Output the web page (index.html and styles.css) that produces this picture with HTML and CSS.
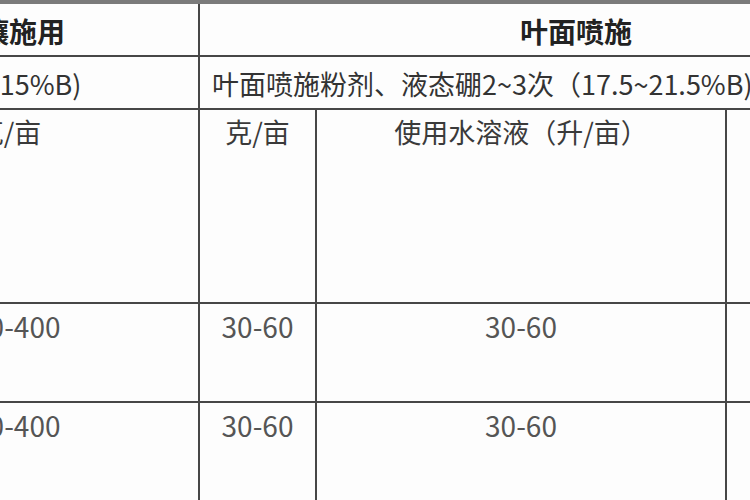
FILE: index.html
```html
<!DOCTYPE html>
<html lang="zh">
<head>
<meta charset="utf-8">
<title>硼肥施用</title>
<link rel="stylesheet" href="styles.css">
</head>
<body>
<div class="frame">
  <table class="boron">
    <colgroup>
      <col class="c-a">
      <col class="c-b">
      <col class="c-c">
      <col class="c-d">
    </colgroup>
    <tr class="r-head">
      <th>土壤施用</th>
      <th colspan="3">叶面喷施</th>
    </tr>
    <tr class="r-desc">
      <td class="center">(含硼15%B)</td>
      <td colspan="3" class="left">叶面喷施粉剂、液态硼2~3次（17.5~21.5%B)</td>
    </tr>
    <tr class="r-unit">
      <td>克/亩</td>
      <td>克/亩</td>
      <td>使用水溶液（升/亩）</td>
      <td>喷施次数</td>
    </tr>
    <tr class="r-val">
      <td class="num">200-400</td>
      <td class="num">30-60</td>
      <td class="num">30-60</td>
      <td class="num">2-3</td>
    </tr>
    <tr class="r-val">
      <td class="num">200-400</td>
      <td class="num">30-60</td>
      <td class="num">30-60</td>
      <td class="num">2-3</td>
    </tr>
  </table>
</div>
</body>
</html>
```
FILE: styles.css
```css
html, body {
  margin: 0;
  padding: 0;
  background: #ffffff;
  overflow: hidden;
}

.frame {
  width: 750px;
  height: 500px;
  overflow: hidden;
  background: #fdfdfd;
}

.boron {
  margin-left: -182px;
  border-collapse: collapse;
  table-layout: fixed;
  width: 1134px;
  font-family: "Noto Sans CJK SC", "Noto Sans", sans-serif;
  font-size: 27px;
  line-height: 32px;
  color: #333333;
  border-top: 4px solid #7b7b7b;
}

.c-a { width: 380px; }
.c-b { width: 117px; }
.c-c { width: 410px; }
.c-d { width: 227px; }

.boron th,
.boron td {
  border: 2px solid #474747;
  padding: 0 8px;
  text-align: center;
  white-space: nowrap;
  overflow: hidden;
}

.boron th {
  font-size: 28px;
  font-weight: 700;
  color: #222222;
}

.r-head th {
  height: 48px;
  padding-top: 3px;
  vertical-align: middle;
}

.r-desc td {
  height: 48px;
  padding-top: 3px;
  vertical-align: middle;
}

.r-desc .left {
  text-align: left;
  padding-left: 12px;
}

.r-unit td {
  height: 186px;
  vertical-align: top;
  padding-top: 6px;
  color: #3a3a3a;
}

.r-val td {
  height: 91px;
  vertical-align: top;
  padding-top: 6px;
}

.num {
  font-size: 28px;
  color: #555555;
}
```
